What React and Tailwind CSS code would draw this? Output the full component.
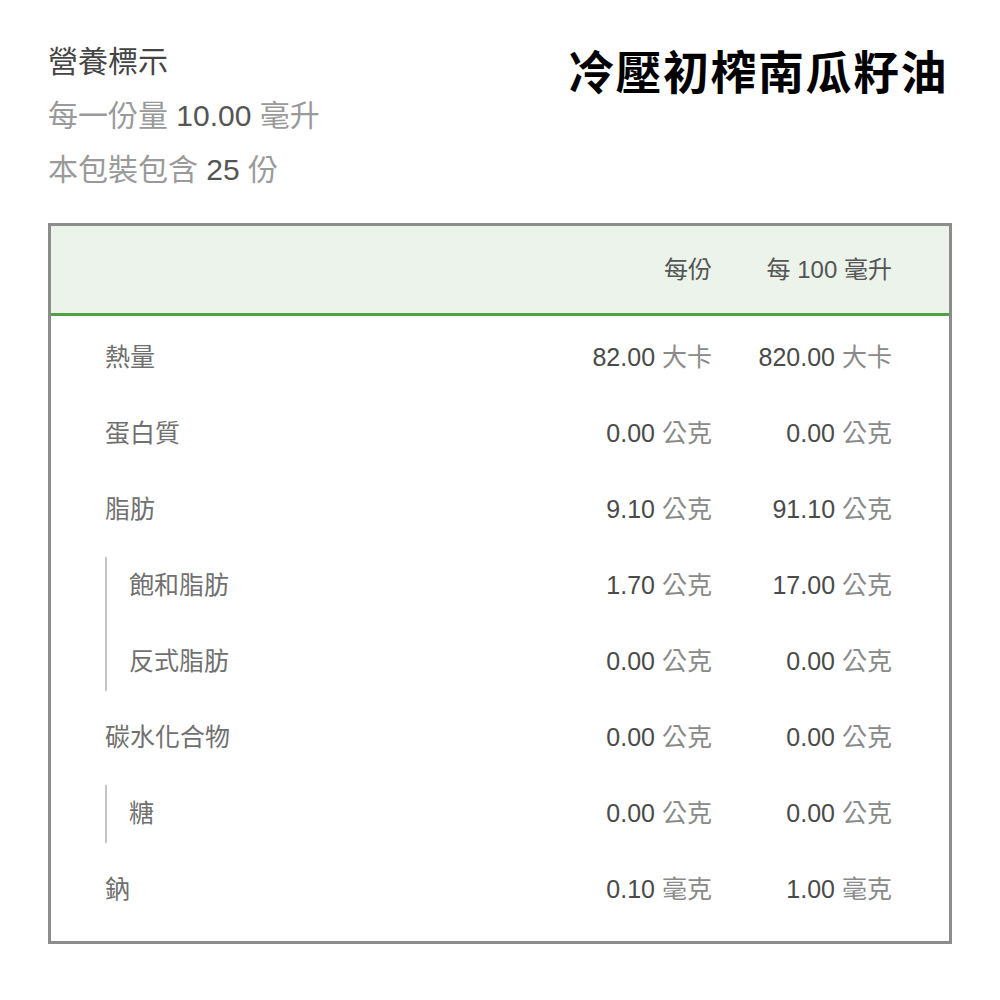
import React from "react";

const font = { fontFamily: '"Liberation Sans", "Noto Sans CJK TC", sans-serif' };

function Row({ label, a, au, b, bu, sub }) {
  return (
    <div className={`flex items-center h-[76px] ${sub ? "pl-[22px]" : "pl-[54px]"} pr-[57px]`}>
      <div className="flex-1 text-[25px] text-[#707070]">{label}</div>
      <div className="w-[180px] text-right text-[25px] whitespace-nowrap">
        <span className="text-[#4a4a4a]">{a}</span>{" "}
        <span className="text-[#8a8a8a]">{au}</span>
      </div>
      <div className="w-[180px] text-right text-[25px] whitespace-nowrap">
        <span className="text-[#4a4a4a]">{b}</span>{" "}
        <span className="text-[#8a8a8a]">{bu}</span>
      </div>
    </div>
  );
}

function SubGroup({ children }) {
  return (
    <div className="flex ml-[54px]">
      <div className="w-[2px] bg-[#c4c4c4] my-[9px]" />
      <div className="flex-1 flex flex-col">{children}</div>
    </div>
  );
}

export default function App() {
  return (
    <div className="w-[1000px] h-[1000px] bg-white px-[48px] pt-[34px]" style={font}>
      <div className="flex justify-between">
        <div className="flex flex-col">
          <div className="h-[54px] flex items-center text-[30px] text-[#444]">營養標示</div>
          <div className="h-[54px] flex items-center text-[30px] text-[#9a9a9a]">
            每一份量&nbsp;<span className="text-[#555]">10.00</span>&nbsp;毫升
          </div>
          <div className="h-[54px] flex items-center text-[30px] text-[#9a9a9a]">
            本包裝包含&nbsp;<span className="text-[#555]">25</span>&nbsp;份
          </div>
        </div>
        <div
          className="text-[46px] font-bold text-black leading-none mt-[12px] mr-[4px] tracking-[1.5px]"
          style={{ fontFamily: '"Noto Sans CJK TC", sans-serif' }}
        >
          冷壓初榨南瓜籽油
        </div>
      </div>

      <div className="mt-[27px] border-[3px] border-[#8c8c8c] pb-[13px]">
        <div className="h-[90px] bg-[#ebf3ea] border-b-[3px] border-[#52a041] flex items-center pr-[57px]">
          <div className="flex-1" />
          <div className="w-[180px] text-right text-[24px] text-[#555]">每份</div>
          <div className="w-[180px] text-right text-[24px] text-[#555]">每 100 毫升</div>
        </div>
        <div className="pt-[4px] flex flex-col">
          <Row label="熱量" a="82.00" au="大卡" b="820.00" bu="大卡" />
          <Row label="蛋白質" a="0.00" au="公克" b="0.00" bu="公克" />
          <Row label="脂肪" a="9.10" au="公克" b="91.10" bu="公克" />
          <SubGroup>
            <Row sub label="飽和脂肪" a="1.70" au="公克" b="17.00" bu="公克" />
            <Row sub label="反式脂肪" a="0.00" au="公克" b="0.00" bu="公克" />
          </SubGroup>
          <Row label="碳水化合物" a="0.00" au="公克" b="0.00" bu="公克" />
          <SubGroup>
            <Row sub label="糖" a="0.00" au="公克" b="0.00" bu="公克" />
          </SubGroup>
          <Row label="鈉" a="0.10" au="毫克" b="1.00" bu="毫克" />
        </div>
      </div>
    </div>
  );
}
